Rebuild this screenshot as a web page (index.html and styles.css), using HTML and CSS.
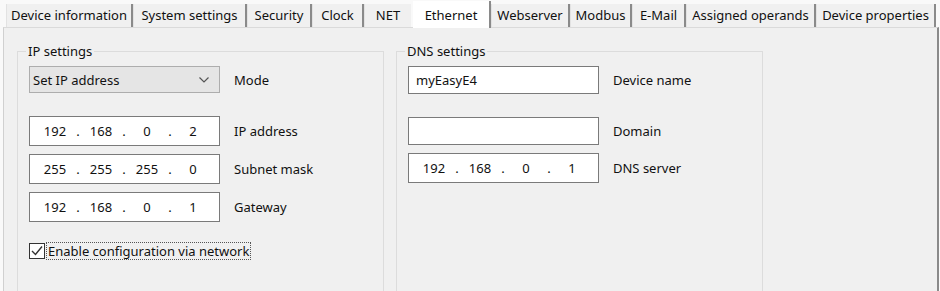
FILE: index.html
```html
<!DOCTYPE html>
<html lang="en">
<head>
  <meta charset="UTF-8">
  <title>Ethernet</title>
  <link rel="stylesheet" href="styles.css">
</head>
<body>
  <div class="dialog">
    <!-- tab strip -->
    <div class="tabs">
      <div class="tab">Device information</div>
      <div class="tab">System settings</div>
      <div class="tab">Security</div>
      <div class="tab">Clock</div>
      <div class="tab">NET</div>
      <div class="tab active">Ethernet</div>
      <div class="tab">Webserver</div>
      <div class="tab">Modbus</div>
      <div class="tab">E-Mail</div>
      <div class="tab">Assigned operands</div>
      <div class="tab">Device properties</div>
    </div>

    <div class="panel">
      <fieldset class="group group-ip">
        <legend>IP settings</legend>
        <div class="row row-mode">
          <div class="select">
            <span>Set IP address</span>
            <svg class="chevron" width="12" height="8" viewBox="0 0 12 8"><path d="M1.5 1.5 L6 6 L10.5 1.5" fill="none" stroke="#555" stroke-width="1.2"/></svg>
          </div>
          <label>Mode</label>
        </div>
        <div class="row row-ip">
          <div class="ipbox"><span>192</span><i>.</i><span>168</span><i>.</i><span>0</span><i>.</i><span>2</span></div>
          <label>IP address</label>
        </div>
        <div class="row row-next">
          <div class="ipbox"><span>255</span><i>.</i><span>255</span><i>.</i><span>255</span><i>.</i><span>0</span></div>
          <label>Subnet mask</label>
        </div>
        <div class="row row-next">
          <div class="ipbox"><span>192</span><i>.</i><span>168</span><i>.</i><span>0</span><i>.</i><span>1</span></div>
          <label>Gateway</label>
        </div>
        <div class="check">
          <span class="box">
            <svg width="14" height="14" viewBox="0 0 14 14"><path d="M2 7 L5.5 10.5 L12 2.5" fill="none" stroke="#333" stroke-width="1.4"/></svg>
          </span>
          <span class="check-label">Enable configuration via network</span>
        </div>
      </fieldset>

      <fieldset class="group group-dns">
        <legend>DNS settings</legend>
        <div class="row row-mode">
          <div class="textbox">myEasyE4</div>
          <label>Device name</label>
        </div>
        <div class="row row-ip">
          <div class="textbox"></div>
          <label>Domain</label>
        </div>
        <div class="row row-next">
          <div class="ipbox"><span>192</span><i>.</i><span>168</span><i>.</i><span>0</span><i>.</i><span>1</span></div>
          <label>DNS server</label>
        </div>
      </fieldset>
    </div>
  </div>
</body>
</html>
```

FILE: styles.css
```css
/* whole window */
body {
  margin: 0;
  background-color: #f9f9f9;
  font-family: "Noto Sans", "Open Sans", sans-serif;
  font-size: 13px;
  color: #111;
}

.dialog {
  width: 940px;
  height: 291px;
  overflow: hidden;
}

/* tab strip */
.tabs {
  display: flex;
  align-items: flex-end;
  height: 27px;
  padding-left: 6px;
}

.tab {
  height: 23px;
  line-height: 22px;
  background-color: #f0f0f0;
  border-left: 1px solid #e2e2e2;
  border-right: 2px solid #8a8a8a;
  box-sizing: border-box;
  white-space: nowrap;
  text-align: center;
}

/* tab widths follow the original dialog */
.tab:nth-child(1) { width: 127px; }
.tab:nth-child(2) { width: 114px; }
.tab:nth-child(3) { width: 65px; }
.tab:nth-child(4) { width: 52px; }
.tab:nth-child(5) { width: 49px; border-right-color: #f9f9f9; }
.tab:nth-child(6) { width: 78px; }
.tab:nth-child(7) { width: 79px; }
.tab:nth-child(8) { width: 62px; }
.tab:nth-child(9) { width: 54px; }
.tab:nth-child(10) { width: 130px; }
.tab:nth-child(11) { width: 120px; }

.tab.active {
  height: 27px;
  line-height: 28px;
  background-color: #fff;
  border-left: none;
  position: relative;
  top: 1px;
}

/* tab body */
.panel {
  display: flex;
  height: 263px;
  margin: 0 1px 0 3px;
  background-color: #f0f0f0;
  border-left: 1px solid #d0d0d0;
  border-top: 1px solid #dadada;
  border-right: 2px solid #8a8a8a;
  border-bottom: 1px solid #c8c8c8;
}

/* group boxes */
.group {
  margin: 15px 0 0 0;
  padding: 0 0 0 11px;
  border: 1px solid #dcdcdc;
  border-bottom: none;
  height: 250px;
  box-sizing: border-box;
}

.group legend {
  padding: 0 2px;
  margin-left: -3px;
  line-height: 16px;
}

.group-ip {
  width: 367px;
  margin-left: 13px;
}

.group-dns {
  width: 367px;
  margin-left: 12px;
}

/* form rows */
.row {
  display: flex;
  align-items: center;
}

.row label {
  margin-left: 14px;
}

.row-mode {
  margin-top: 7px;
}

.row-ip {
  margin-top: 23px;
}

.row-next {
  margin-top: 8px;
}

.select {
  width: 191px;
  height: 27px;
  box-sizing: border-box;
  border: 1px solid #adadad;
  background-color: #e5e5e5;
  display: flex;
  align-items: center;
  justify-content: space-between;
  padding: 0 9px 0 3px;
}

.chevron {
  display: block;
}

.textbox,
.ipbox {
  width: 191px;
  height: 30px;
  box-sizing: border-box;
  border: 1px solid #7a7a7a;
  background-color: #fff;
}

.textbox {
  padding: 4px 0 0 7px;
  height: 28px;
}

.ipbox {
  display: flex;
  align-items: center;
  padding-left: 7px;
}

.ipbox span {
  width: 36px;
  text-align: center;
}

.ipbox i {
  font-style: normal;
  width: 10px;
  text-align: center;
}

/* checkbox */
.check {
  display: flex;
  align-items: center;
  margin-top: 20px;
}

.box {
  width: 16px;
  height: 16px;
  box-sizing: border-box;
  border: 1px solid #333;
  background-color: #fff;
  display: flex;
  align-items: center;
  justify-content: center;
}

.check-label {
  margin-left: 1px;
  padding: 0 1px;
  border: 1px dotted #555;
  line-height: 16px;
}
```
